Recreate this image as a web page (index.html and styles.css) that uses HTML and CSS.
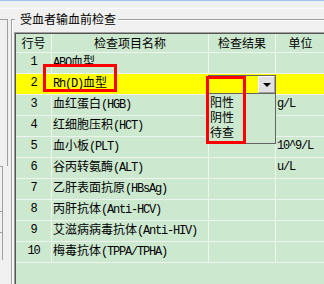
FILE: index.html
```html
<!DOCTYPE html>
<html>
  <head>
    <meta charset="UTF-8">
    <title>受血者输血前检查</title>
    <link rel="stylesheet" href="styles.css">
  </head>
  <body>
    <div class="window">
      <div class="topbar"></div>

      <div class="main">
        <!-- pedaços dos controles vizinhos, cortados na borda -->
        <div class="side">
          <div class="side-box"></div>
          <div class="side-stub stub-a"></div>
          <div class="side-stub stub-b"></div>
          <div class="side-stub stub-c"></div>
        </div>

        <fieldset class="group">
          <legend>受血者输血前检查</legend>
          <div class="grid">
            <table>
              <colgroup>
                <col class="c-no">
                <col class="c-name">
                <col class="c-result">
                <col class="c-unit">
              </colgroup>
              <thead>
                <tr>
                  <th>行号</th>
                  <th>检查项目名称</th>
                  <th>检查结果</th>
                  <th>单位</th>
                </tr>
              </thead>
              <tbody>
                <tr>
                  <td class="no">1</td>
                  <td class="name"><span class="en">ABO</span>血型</td>
                  <td></td>
                  <td class="unit"></td>
                </tr>
                <tr class="sel">
                  <td class="no">2</td>
                  <td class="name"><span class="en">Rh(D)</span>血型</td>
                  <td class="edit">
                    <div class="combo">
                      <div class="combo-btn"><span class="arrow"></span></div>
                      <div class="drop">
                        <div class="drop-item">阳性</div>
                        <div class="drop-item">阴性</div>
                        <div class="drop-item">待查</div>
                      </div>
                    </div>
                  </td>
                  <td class="unit"></td>
                </tr>
                <tr>
                  <td class="no">3</td>
                  <td class="name">血红蛋白<span class="en">(HGB)</span></td>
                  <td></td>
                  <td class="unit">g/L</td>
                </tr>
                <tr>
                  <td class="no">4</td>
                  <td class="name">红细胞压积<span class="en">(HCT)</span></td>
                  <td></td>
                  <td class="unit"></td>
                </tr>
                <tr>
                  <td class="no">5</td>
                  <td class="name">血小板<span class="en">(PLT)</span></td>
                  <td></td>
                  <td class="unit">10^9/L</td>
                </tr>
                <tr>
                  <td class="no">6</td>
                  <td class="name">谷丙转氨酶<span class="en">(ALT)</span></td>
                  <td></td>
                  <td class="unit">u/L</td>
                </tr>
                <tr>
                  <td class="no">7</td>
                  <td class="name">乙肝表面抗原<span class="en">(HBsAg)</span></td>
                  <td></td>
                  <td class="unit"></td>
                </tr>
                <tr>
                  <td class="no">8</td>
                  <td class="name">丙肝抗体<span class="en">(Anti-HCV)</span></td>
                  <td></td>
                  <td class="unit"></td>
                </tr>
                <tr>
                  <td class="no">9</td>
                  <td class="name">艾滋病病毒抗体<span class="en">(Anti-HIV)</span></td>
                  <td></td>
                  <td class="unit"></td>
                </tr>
                <tr>
                  <td class="no">10</td>
                  <td class="name">梅毒抗体<span class="en">(TPPA/TPHA)</span></td>
                  <td></td>
                  <td class="unit"></td>
                </tr>
              </tbody>
            </table>
          </div>
        </fieldset>
      </div>

      <!-- marcações vermelhas por cima da tela -->
      <div class="mark mark-name"></div>
      <div class="mark mark-result"></div>
    </div>
  </body>
</html>
```

FILE: styles.css
```css
/* Janela */
html, body {
  margin: 0;
  overflow: hidden;
}

body {
  background-color: #f0f0f0;
  font-family: "Noto Sans CJK SC", sans-serif;
  font-size: 12px;
  color: #000;
}

.window {
  position: relative;
  width: 420px;
  height: 284px;
  overflow: hidden;
}

.topbar {
  height: 7px;
  border-top: 1px solid #9cc4ec;
  border-bottom: 1px solid #fafafa;
}

.main {
  display: flex;
  align-items: flex-start;
}

/* Controles vizinhos à esquerda */
.side {
  width: 8px;
  display: flex;
  flex-direction: column;
  align-items: flex-start;
}

.side-box {
  width: 7px;
  height: 146px;
  margin-top: 10px;
  border-top: 1px solid #a0a0a0;
  border-right: 1px solid #a0a0a0;
}

.side-stub {
  width: 2px;
  border-top: 1px solid #a0a0a0;
  border-right: 1px solid #a0a0a0;
}

.stub-a {
  height: 44px;
}

.stub-b {
  height: 20px;
}

.stub-c {
  height: 27px;
}

/* Caixa de grupo */
.group {
  margin: 2px 0 0 3px;
  padding: 5px 0 0 2px;
  border: 1px solid #a0a0a0;
  box-shadow: inset 1px 1px 0 #fff;
  min-width: 0;
}

.group legend {
  margin-left: 1px;
  padding: 0 2px 0 5px;
  line-height: 16px;
  background-color: #f0f0f0;
}

/* Grade */
.grid {
  width: 400px;
  height: 260px;
  padding: 1px 0 0 1px;
  background-color: #cce8cf;
  border-top: 1px solid #a0a0a0;
  border-left: 1px solid #a0a0a0;
  box-shadow: inset 1px 1px 0 #555;
}

table {
  border-collapse: separate;
  border-spacing: 0;
  table-layout: fixed;
  width: 310px;
}

.c-no {
  width: 36px;
}

.c-name {
  width: 157px;
}

.c-result {
  width: 67px;
}

.c-unit {
  width: 50px;
}

th, td {
  padding: 0;
  border-right: 1px solid #eef5ee;
  border-bottom: 1px solid #eef5ee;
  line-height: 14px;
  vertical-align: middle;
  white-space: nowrap;
  overflow: visible;
}

th {
  font-weight: normal;
  text-align: center;
}

thead tr {
  height: 19px;
}

tbody tr {
  height: 21px;
}

tbody td {
  padding-bottom: 3px;
}

td.name {
  padding-left: 1px;
}

td.unit {
  padding-left: 1px;
}

/* Texto latino em meia largura, como na fonte do sistema */
td.no, td.unit, .en {
  font-family: "Liberation Mono", monospace;
  font-size: 12px;
  letter-spacing: -1.2px;
}

td.no {
  text-align: center;
}

/* Linha selecionada */
tr.sel td {
  background-color: #ffff00;
  border-right-color: #ffff00;
}

/* Editor do resultado */
td.edit {
  position: relative;
}

.combo {
  position: absolute;
  left: -1px;
  top: 1px;
  width: 68px;
  height: 18px;
  box-sizing: border-box;
  border: 1px solid #646464;
  border-bottom: none;
  display: flex;
  justify-content: flex-end;
}

.combo-btn {
  width: 17px;
  height: 17px;
  box-sizing: border-box;
  background-color: #e1e1e1;
  border-top: 1px solid #fff;
  border-left: 1px solid #fff;
  border-right: 1px solid #a0a0a0;
  border-bottom: 1px solid #a0a0a0;
  display: flex;
  align-items: center;
  justify-content: center;
}

.arrow {
  width: 0;
  height: 0;
  border-left: 4px solid transparent;
  border-right: 4px solid transparent;
  border-top: 4px solid #000;
}

.drop {
  position: absolute;
  left: -1px;
  top: 100%;
  width: 68px;
  height: 51px;
  box-sizing: border-box;
  padding-left: 1px;
  background-color: #cce8cf;
  border: 1px solid #646464;
}

.drop-item {
  line-height: 15px;
  font-family: "Noto Sans CJK SC", sans-serif;
  letter-spacing: 0;
}

/* Marcações vermelhas */
.mark {
  position: absolute;
  box-sizing: border-box;
  border: 3px solid #f00;
}

.mark-name {
  left: 43px;
  top: 64px;
  width: 74px;
  height: 28px;
}

.mark-result {
  left: 206px;
  top: 76px;
  width: 40px;
  height: 68px;
}
```
